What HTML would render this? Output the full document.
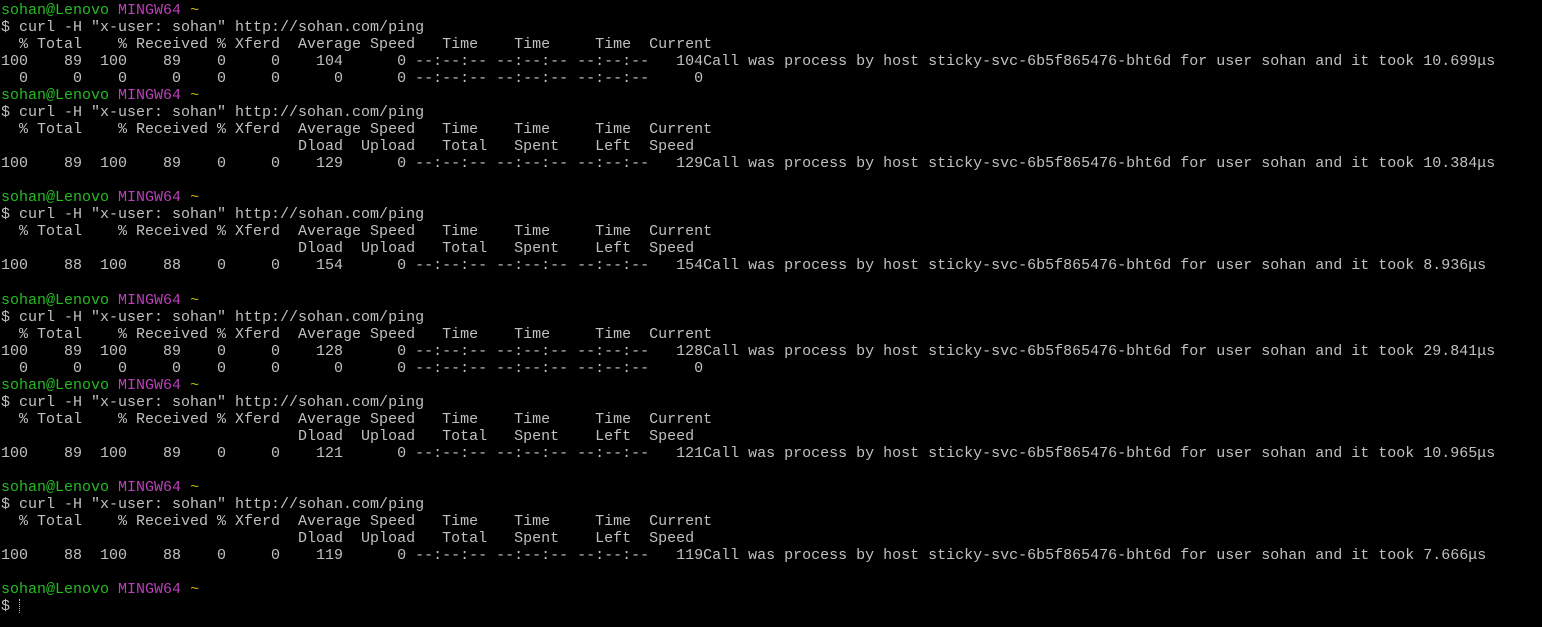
<!DOCTYPE html><html><head><meta charset="utf-8"><style>
html,body{margin:0;background:#000;width:1542px;height:627px;overflow:hidden}
pre{margin:0;padding:2px 0 0 1px;font-family:"Liberation Mono","DejaVu Sans Mono",monospace;font-size:15px;line-height:17.03px;color:#c0c0c0;white-space:pre}
.g{color:#25bc24}.p{color:#bc3fbc}.y{color:#bcbc00}
.c{display:inline-block;width:1px;height:14px;border-left:1px dotted #c0c0c0;vertical-align:-3px}
</style></head><body><pre><span class="g">sohan@Lenovo</span> <span class="p">MINGW64</span> <span class="y">~</span>
$ curl -H "x-user: sohan" http://sohan.com/ping
  % Total    % Received % Xferd  Average Speed   Time    Time     Time  Current
100    89  100    89    0     0    104      0 --:--:-- --:--:-- --:--:--   104Call was process by host sticky-svc-6b5f865476-bht6d for user sohan and it took 10.699μs
  0     0    0     0    0     0      0      0 --:--:-- --:--:-- --:--:--     0
<span class="g">sohan@Lenovo</span> <span class="p">MINGW64</span> <span class="y">~</span>
$ curl -H "x-user: sohan" http://sohan.com/ping
  % Total    % Received % Xferd  Average Speed   Time    Time     Time  Current
                                 Dload  Upload   Total   Spent    Left  Speed
100    89  100    89    0     0    129      0 --:--:-- --:--:-- --:--:--   129Call was process by host sticky-svc-6b5f865476-bht6d for user sohan and it took 10.384μs

<span class="g">sohan@Lenovo</span> <span class="p">MINGW64</span> <span class="y">~</span>
$ curl -H "x-user: sohan" http://sohan.com/ping
  % Total    % Received % Xferd  Average Speed   Time    Time     Time  Current
                                 Dload  Upload   Total   Spent    Left  Speed
100    88  100    88    0     0    154      0 --:--:-- --:--:-- --:--:--   154Call was process by host sticky-svc-6b5f865476-bht6d for user sohan and it took 8.936μs

<span class="g">sohan@Lenovo</span> <span class="p">MINGW64</span> <span class="y">~</span>
$ curl -H "x-user: sohan" http://sohan.com/ping
  % Total    % Received % Xferd  Average Speed   Time    Time     Time  Current
100    89  100    89    0     0    128      0 --:--:-- --:--:-- --:--:--   128Call was process by host sticky-svc-6b5f865476-bht6d for user sohan and it took 29.841μs
  0     0    0     0    0     0      0      0 --:--:-- --:--:-- --:--:--     0
<span class="g">sohan@Lenovo</span> <span class="p">MINGW64</span> <span class="y">~</span>
$ curl -H "x-user: sohan" http://sohan.com/ping
  % Total    % Received % Xferd  Average Speed   Time    Time     Time  Current
                                 Dload  Upload   Total   Spent    Left  Speed
100    89  100    89    0     0    121      0 --:--:-- --:--:-- --:--:--   121Call was process by host sticky-svc-6b5f865476-bht6d for user sohan and it took 10.965μs

<span class="g">sohan@Lenovo</span> <span class="p">MINGW64</span> <span class="y">~</span>
$ curl -H "x-user: sohan" http://sohan.com/ping
  % Total    % Received % Xferd  Average Speed   Time    Time     Time  Current
                                 Dload  Upload   Total   Spent    Left  Speed
100    88  100    88    0     0    119      0 --:--:-- --:--:-- --:--:--   119Call was process by host sticky-svc-6b5f865476-bht6d for user sohan and it took 7.666μs

<span class="g">sohan@Lenovo</span> <span class="p">MINGW64</span> <span class="y">~</span>
$ <span class="c"></span></pre></body></html>
